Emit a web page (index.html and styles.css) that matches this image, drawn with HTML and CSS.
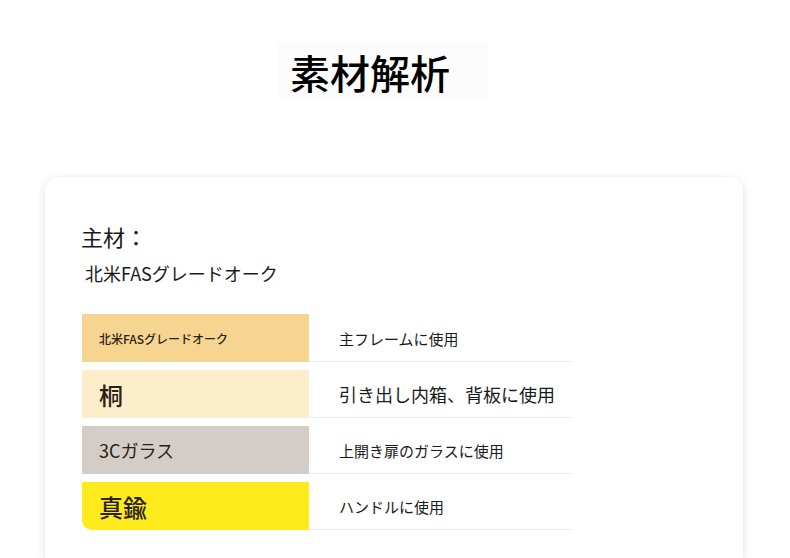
FILE: index.html
```html
<!DOCTYPE html>
<html lang="ja">
<head>
<meta charset="utf-8">
<title>素材解析</title>
<link rel="stylesheet" href="styles.css">
</head>
<body>
<header class="page-head">
  <h1 class="title">素材解析</h1>
</header>
<section class="card">
  <h2 class="main-label">主材：</h2>
  <p class="main-value">北米FASグレードオーク</p>
  <div class="mat-table">
    <div class="mat-row">
      <div class="mat-name oak">北米FASグレードオーク</div>
      <div class="mat-use">主フレームに使用</div>
    </div>
    <div class="mat-row">
      <div class="mat-name paulownia">桐</div>
      <div class="mat-use use-lg">引き出し内箱、背板に使用</div>
    </div>
    <div class="mat-row">
      <div class="mat-name glass">3Cガラス</div>
      <div class="mat-use">上開き扉のガラスに使用</div>
    </div>
    <div class="mat-row">
      <div class="mat-name brass">真鍮</div>
      <div class="mat-use">ハンドルに使用</div>
    </div>
  </div>
</section>
</body>
</html>
```

FILE: styles.css
```css
* { box-sizing: border-box; }
html, body { margin: 0; padding: 0; background: #ffffff; }
body {
  font-family: "Noto Sans CJK JP", "Noto Sans", sans-serif;
  color: #1a1a1a;
  width: 790px;
  height: 558px;
  overflow: hidden;
}
.page-head {
  display: flex;
  justify-content: center;
  align-items: flex-start;
  padding-top: 42px;
  height: 177px;
}
.title {
  margin: 0 25px 0 0;
  font-size: 40px;
  font-weight: 500;
  line-height: 52px;
  color: #000;
  padding: 4px 37px 0 12px;
  background: #fcfcfc;
}
.card {
  margin-left: 45px;
  width: 698px;
  height: 381px;
  background: #fff;
  border-radius: 14px 14px 0 0;
  box-shadow: 0 2px 10px rgba(0, 0, 0, 0.12);
  padding: 43px 0 0 36px;
}
.main-label {
  margin: 0;
  font-size: 22px;
  font-weight: 400;
  line-height: 33px;
  color: #1a1a1a;
}
.main-value {
  margin: 7px 0 0 4px;
  font-size: 18px;
  line-height: 27px;
  color: #1a1a1a;
}
.mat-table {
  margin-top: 19px;
  display: flex;
  flex-direction: column;
  width: 490px;
  margin-left: 1px;
}
.mat-row {
  display: flex;
  height: 56px;
  align-items: flex-end;
}
.mat-name {
  width: 227px;
  height: 48px;
  display: flex;
  align-items: center;
  padding-left: 17px;
  color: #2a2116;
}
.mat-use {
  flex: 1;
  align-self: stretch;
  border-bottom: 1px solid #ececec;
  padding: 9px 0 0 30px;
  display: flex;
  align-items: center;
  font-size: 15px;
  color: #1a1a1a;
}
.use-lg { font-size: 18px; }
.oak { background: #f6d590; font-size: 12px; font-weight: 500; }
.paulownia { background: #fdeecb; font-size: 24px; font-weight: 500; }
.glass { background: #d4ccc7; font-size: 18px; }
.brass { background: #ffea1c; font-size: 24px; font-weight: 500; border-bottom-left-radius: 10px; }
```
